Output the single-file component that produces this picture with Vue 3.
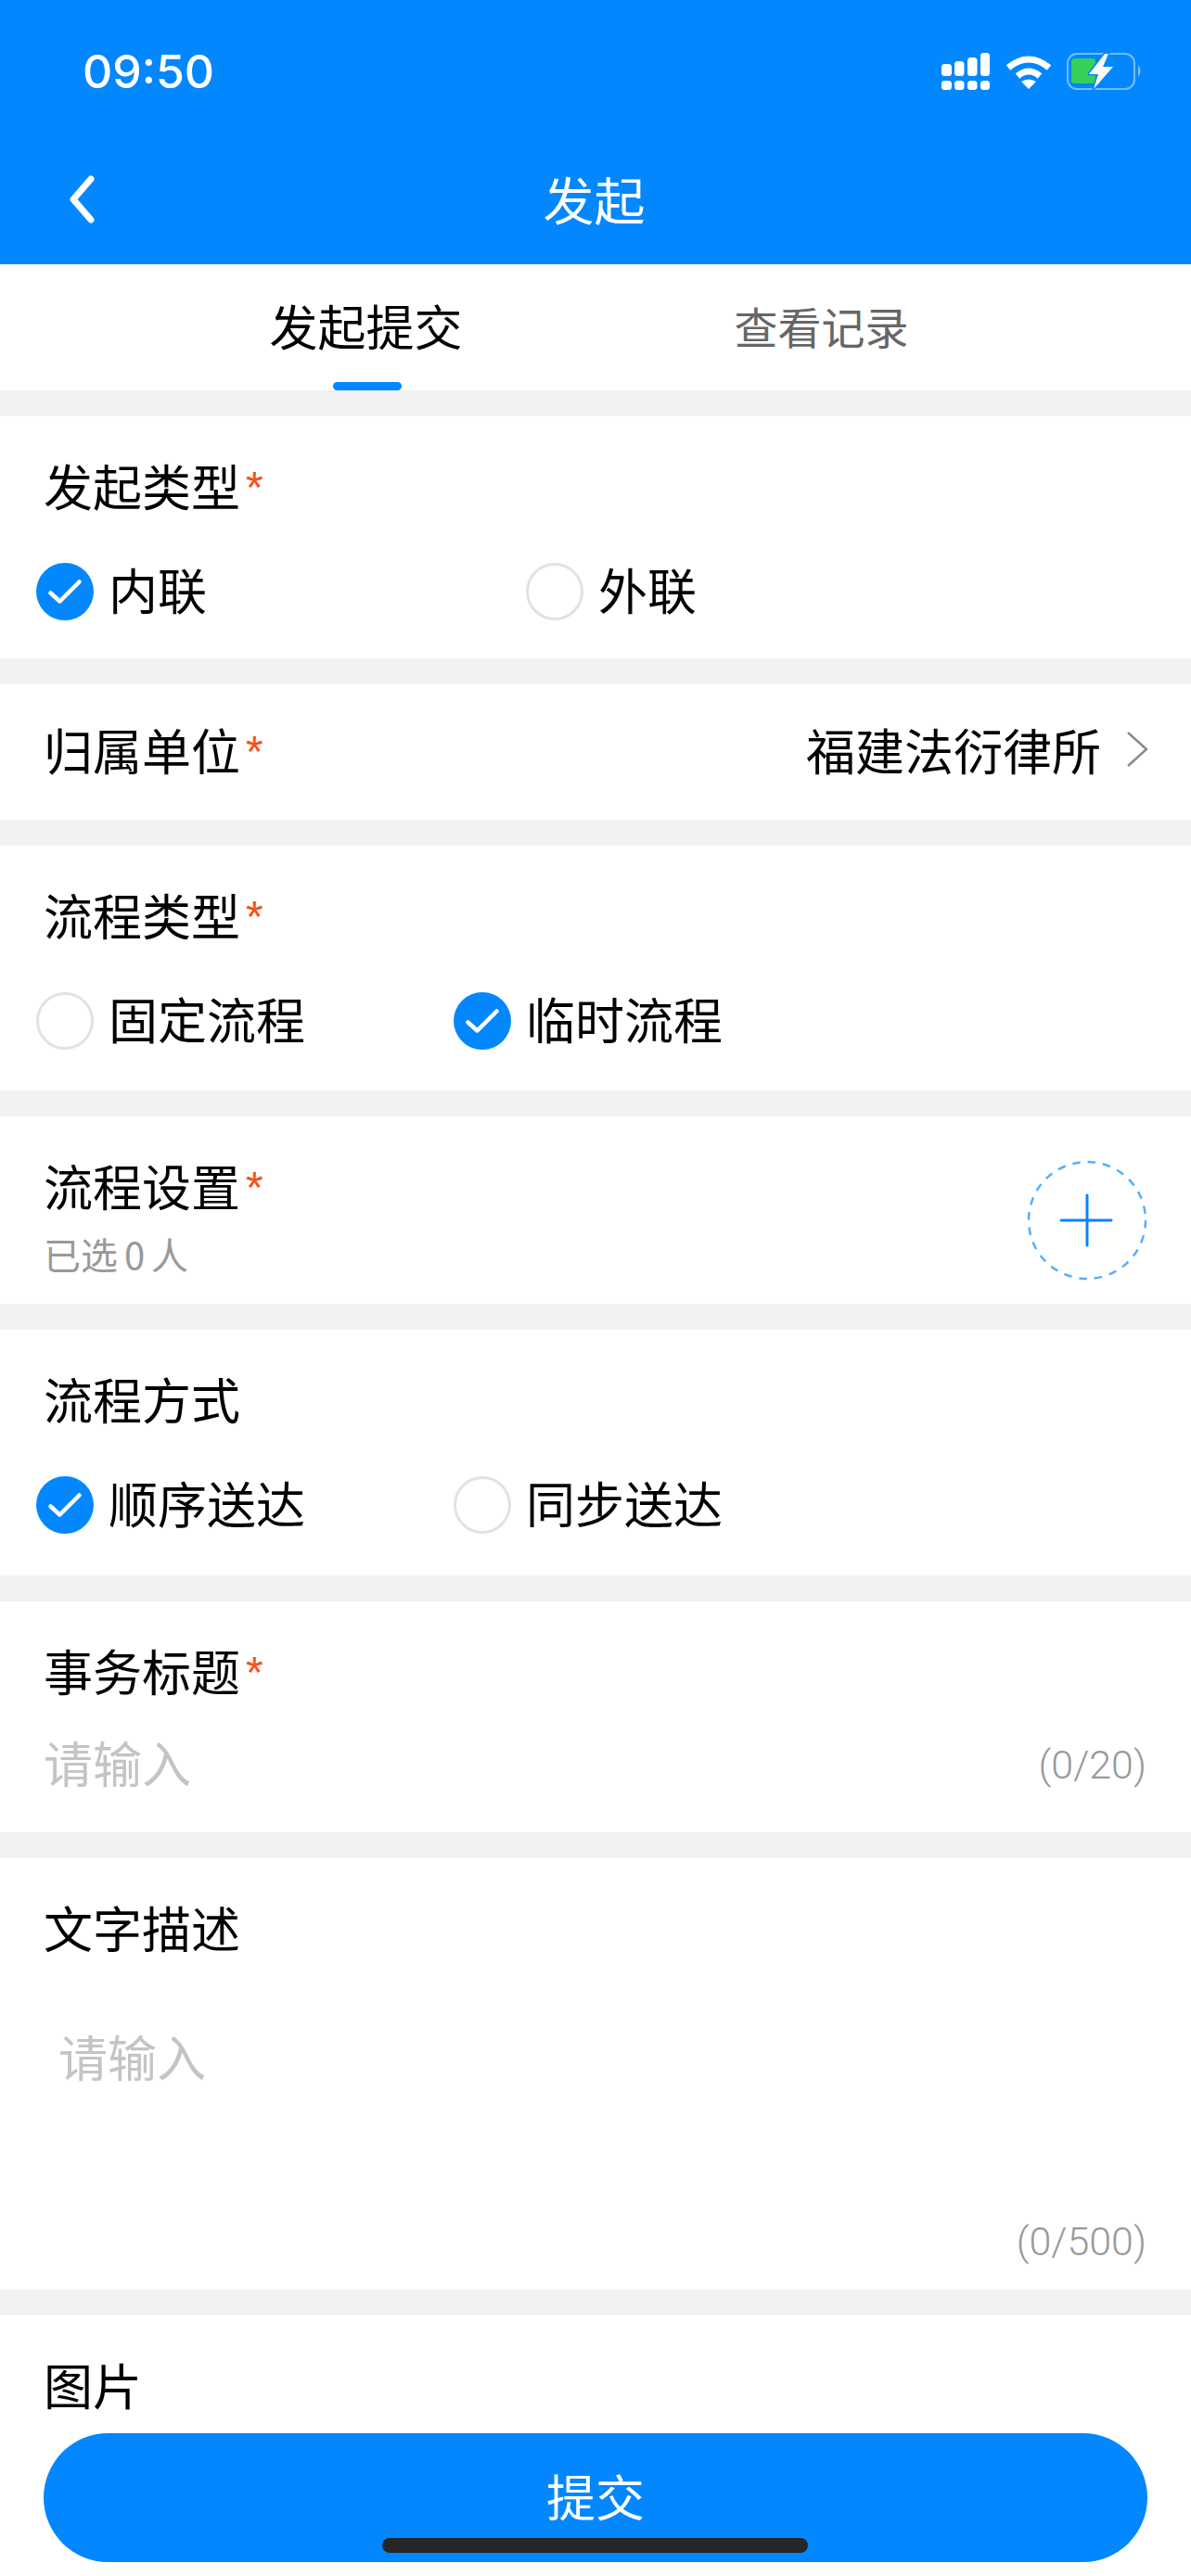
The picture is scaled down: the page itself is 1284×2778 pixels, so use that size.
<template>
  <div class="page">
    <header class="header">
      <div class="status">
        <span class="time">09:50</span>
        <div class="status-icons">
          <svg width="52" height="40" viewBox="0 0 52 40" fill="#fff">
            <rect x="0" y="12" width="11" height="13" rx="3.5" />
            <rect x="14" y="9" width="10.5" height="16" rx="3.5" />
            <rect x="28" y="5" width="10.5" height="20" rx="3.5" />
            <rect x="42" y="0" width="10" height="25" rx="3.5" />
            <rect x="0" y="30" width="11" height="10" rx="3.5" />
            <rect x="14" y="30" width="10.5" height="10" rx="3.5" />
            <rect x="28" y="30" width="10.5" height="10" rx="3.5" />
            <rect x="42" y="30" width="10" height="10" rx="3.5" />
          </svg>
          <svg class="wifi" width="50" height="37" viewBox="0 0 50 37">
            <path d="M3 14Q25 -4 47 14" fill="none" stroke="#fff" stroke-width="7" />
            <path d="M13 23Q25 13 37 23" fill="none" stroke="#fff" stroke-width="7" />
            <path d="M25 37L17 29Q25 24 33 29Z" fill="#fff" />
          </svg>
          <svg width="82" height="40" viewBox="0 0 82 40">
            <rect x="1" y="1" width="72" height="38" rx="10" fill="none" stroke="#fff" stroke-opacity=".45" stroke-width="2" />
            <rect x="5" y="6" width="26" height="27" rx="3" fill="#34d058" />
            <path d="M77 13Q82 19 77 26Z" fill="#fff" fill-opacity=".5" />
            <path d="M41 1L24 23H34L29 39L50 15H39L45 1Z" fill="#fff" stroke="#0287ff" stroke-width="3" paint-order="stroke" stroke-linejoin="round" />
          </svg>
        </div>
      </div>
      <div class="nav">
        <svg class="back" width="28" height="52" viewBox="0 0 28 52">
          <path d="M24 4L5 26L24 48" fill="none" stroke="#fff" stroke-width="7" stroke-linecap="round" stroke-linejoin="round" />
        </svg>
        <span class="nav-title">发起</span>
      </div>
    </header>

    <div class="tabs">
      <div
        v-for="(tab, i) in tabs"
        :key="tab"
        class="tab"
        :class="{ active: activeTab === i }"
        @click="activeTab = i"
      >
        {{ tab }}
      </div>
    </div>

    <div class="body">
      <section class="card first">
        <div class="title">发起类型<span class="star">*</span></div>
        <div class="radios wide">
          <div v-for="opt in linkTypes" :key="opt" class="radio" @click="linkType = opt">
            <span class="dot" :class="{ on: linkType === opt }">
              <svg v-if="linkType === opt" width="62" height="62" viewBox="0 0 62 62">
                <path d="M15.5 32.5L25.5 41.5L46.5 20.5" fill="none" stroke="#fff" stroke-width="4.5" stroke-linecap="round" stroke-linejoin="round" />
              </svg>
            </span>
            <span class="label">{{ opt }}</span>
          </div>
        </div>
      </section>

      <section class="card row">
        <div class="title">归属单位<span class="star">*</span></div>
        <div class="picker">
          福建法衍律所
          <svg width="24" height="38" viewBox="0 0 24 38">
            <path d="M2 1L22 19L2 37" fill="none" stroke="#8a8a8a" stroke-width="2.5" />
          </svg>
        </div>
      </section>

      <section class="card flow">
        <div class="title">流程类型<span class="star">*</span></div>
        <div class="radios">
          <div v-for="opt in flowTypes" :key="opt" class="radio" @click="flowType = opt">
            <span class="dot" :class="{ on: flowType === opt }">
              <svg v-if="flowType === opt" width="62" height="62" viewBox="0 0 62 62">
                <path d="M15.5 32.5L25.5 41.5L46.5 20.5" fill="none" stroke="#fff" stroke-width="4.5" stroke-linecap="round" stroke-linejoin="round" />
              </svg>
            </span>
            <span class="label">{{ opt }}</span>
          </div>
        </div>
      </section>

      <section class="card setting">
        <div>
          <div class="title">流程设置<span class="star">*</span></div>
          <div class="sub">已选 0 人</div>
        </div>
        <svg class="add" width="130" height="130" viewBox="0 0 130 130">
          <circle cx="65" cy="65" r="63" fill="none" stroke="#56adff" stroke-width="2.5" stroke-dasharray="8.5 8" />
          <path d="M37 65H91M65 38V92" fill="none" stroke="#0a84ff" stroke-width="3" stroke-linecap="round" />
        </svg>
      </section>

      <section class="card">
        <div class="title">流程方式</div>
        <div class="radios">
          <div v-for="opt in sendTypes" :key="opt" class="radio" @click="sendType = opt">
            <span class="dot" :class="{ on: sendType === opt }">
              <svg v-if="sendType === opt" width="62" height="62" viewBox="0 0 62 62">
                <path d="M15.5 32.5L25.5 41.5L46.5 20.5" fill="none" stroke="#fff" stroke-width="4.5" stroke-linecap="round" stroke-linejoin="round" />
              </svg>
            </span>
            <span class="label">{{ opt }}</span>
          </div>
        </div>
      </section>

      <section class="card subject">
        <div class="title">事务标题<span class="star">*</span></div>
        <div class="input-row">
          <span class="placeholder">请输入</span>
          <span class="count">(0/20)</span>
        </div>
      </section>

      <section class="card desc">
        <div class="title">文字描述</div>
        <div class="textarea placeholder">请输入</div>
        <div class="count">(0/500)</div>
      </section>

      <section class="card images">
        <div class="title">图片</div>
      </section>
    </div>

    <button class="submit">提交</button>
    <div class="home-bar"></div>
  </div>
</template>

<script setup>
import { ref } from 'vue';

const tabs = ['发起提交', '查看记录'];
const activeTab = ref(0);

const linkTypes = ['内联', '外联'];
const linkType = ref('内联');

const flowTypes = ['固定流程', '临时流程'];
const flowType = ref('临时流程');

const sendTypes = ['顺序送达', '同步送达'];
const sendType = ref('顺序送达');
</script>

<style>
body {
  background: #f2f2f2;
}
</style>

<style scoped>
.page {
  position: relative;
  display: flex;
  flex-direction: column;
  height: 2778px;
  overflow: hidden;
  background: #f2f2f2;
  color: #000;
  font-family: "Noto Sans CJK SC", "Liberation Sans", sans-serif;
  font-size: 53px;
  font-weight: 400;
}
.header {
  height: 285px;
  background: #0287ff;
  color: #fff;
}
.status {
  display: flex;
  justify-content: space-between;
  align-items: center;
  height: 154px;
  padding: 0 52px 0 89px;
}
.time {
  font-family: Inter, "Liberation Sans", sans-serif;
  font-size: 50px;
  font-weight: 500;
}
.status-icons {
  display: flex;
  align-items: center;
  gap: 17px;
}
.wifi {
  margin-right: -1px;
}
.nav {
  display: grid;
  grid-template-columns: 1fr auto 1fr;
  align-items: center;
  height: 122px;
  padding-left: 74px;
  padding-right: 74px;
}
.back {
  display: block;
}
.nav-title {
  margin-left: -3px;
  padding-bottom: 4px;
  font-size: 55px;
  line-height: 72px;
}
.tabs {
  display: flex;
  justify-content: center;
  height: 136px;
  padding-right: 4px;
  background: #fff;
}
.tab {
  position: relative;
  width: 491px;
  padding-top: 31px;
  text-align: center;
  color: #666;
  font-size: 47px;
  line-height: 70px;
}
.tab.active {
  color: #000;
  font-size: 52px;
}
.tab.active::after {
  content: "";
  position: absolute;
  left: 50%;
  bottom: 0;
  width: 74px;
  height: 9px;
  margin-left: -36px;
  border-radius: 5px;
  background: #0287ff;
}
.body {
  display: flex;
  flex: 1;
  flex-direction: column;
  gap: 28px;
  padding-top: 28px;
}
.card {
  padding: 38px 48px 45px;
  background: #fff;
}
.card.first {
  padding-bottom: 41px;
}
.card.flow {
  padding-bottom: 44px;
}
.title {
  margin-left: -1px;
  line-height: 72px;
}
.star {
  margin-left: 6px;
  color: #f4511e;
  font-family: "Liberation Sans", sans-serif;
  font-size: 48px;
  line-height: 0;
  vertical-align: 4px;
}
.row {
  display: flex;
  justify-content: space-between;
  align-items: center;
  box-sizing: border-box;
  height: 146px;
  padding-top: 0;
  padding-bottom: 6px;
}
.picker {
  display: flex;
  align-items: center;
  gap: 27px;
  margin-right: -2px;
}
.radios {
  display: flex;
  margin: 48px 0 0 -9px;
}
.radio {
  display: flex;
  align-items: center;
  gap: 16px;
  width: 450px;
  height: 62px;
  line-height: 62px;
}
.radios.wide .radio {
  width: 528px;
}
.label {
  padding-bottom: 6px;
}
.dot {
  box-sizing: border-box;
  width: 62px;
  height: 62px;
  border: 3px solid #e2e2e2;
  border-radius: 50%;
}
.dot.on {
  border: 0;
  background: #0287ff;
}
.dot svg {
  display: block;
}
.setting {
  display: flex;
  justify-content: space-between;
  align-items: flex-start;
  padding-right: 47px;
  padding-bottom: 16px;
}
.sub {
  margin-left: -1px;
  color: #999;
  font-size: 40px;
  line-height: 76px;
  word-spacing: -2px;
}
.add {
  display: block;
  margin-top: 9px;
}
.input-row {
  display: flex;
  justify-content: space-between;
  align-items: center;
  height: 72px;
  margin-top: 27px;
  margin-bottom: -5px;
  margin-left: -1px;
}
.placeholder {
  color: #c4c4c4;
}
.count {
  color: #999;
  font-family: Roboto, "Liberation Sans", sans-serif;
  font-size: 43px;
  font-weight: 300;
  line-height: 50px;
  text-align: right;
}
.input-row .count {
  padding-top: 6px;
}
.textarea {
  height: 211px;
  margin-top: 67px;
  padding-left: 15px;
  line-height: 72px;
}
.desc {
  padding-bottom: 27px;
}
.images {
  flex: 1;
}
.submit {
  position: absolute;
  left: 47px;
  top: 2624px;
  width: 1190px;
  height: 139px;
  padding-bottom: 6px;
  border: 0;
  border-radius: 70px;
  background: #0287ff;
  color: #fff;
  font-family: inherit;
  font-size: 53px;
  font-weight: 400;
}
.home-bar {
  position: absolute;
  left: 412px;
  top: 2737px;
  width: 459px;
  height: 16px;
  border-radius: 8px;
  background: #262626;
}
</style>
